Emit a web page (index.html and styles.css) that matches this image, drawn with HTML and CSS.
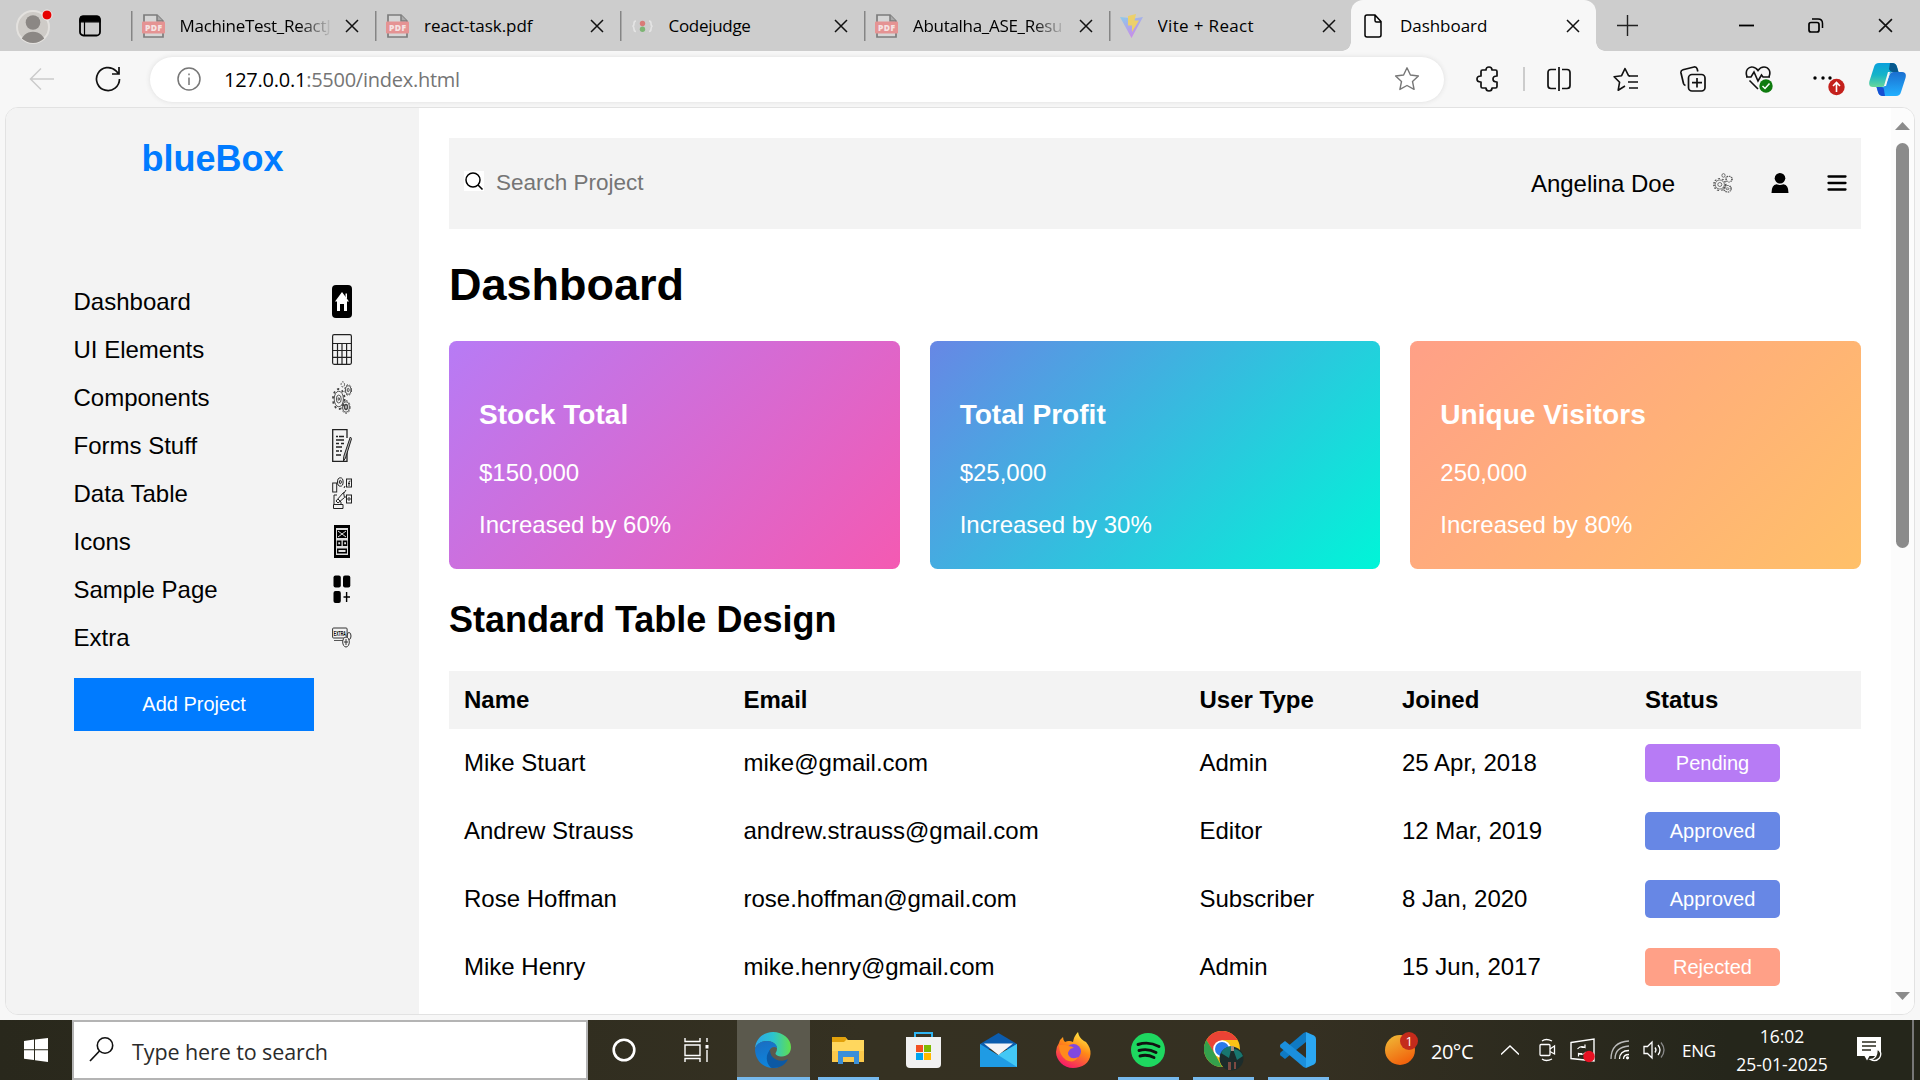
FILE: index.html
```html
<!DOCTYPE html>
<html lang="en">
<head>
<meta charset="utf-8">
<title>Dashboard</title>
<link rel="stylesheet" href="styles.css">
</head>
<body>
<svg class="defs" width="0" height="0">
  <defs>
    <symbol id="pdf" viewBox="0 0 23 24">
      <path d="M2 1h13l6 6v16H2z" fill="#d6d6d6" stroke="#7c7c7c" stroke-width="1.7"/>
      <path d="M15 1v6h6" fill="#aaa" stroke="#7c7c7c" stroke-width="1.5"/>
      <rect y="7.5" width="23" height="12" rx="1" fill="#e59393"/>
      <text x="11.5" y="16.8" text-anchor="middle" font-family="Open Sans" font-weight="800" font-size="8.5" textLength="17" fill="#f5e3e3">PDF</text>
    </symbol>
    <symbol id="x" viewBox="0 0 14 14"><path d="M1 1l12 12M13 1L1 13" stroke="#111" stroke-width="1.5" fill="none"/></symbol>
    <symbol id="gears" viewBox="0 0 20 33">
      <g fill="none" stroke="#444" stroke-width=".9">
        <ellipse cx="6.8" cy="18" rx="4.6" ry="7.8"/>
        <ellipse cx="6.8" cy="18" rx="5.8" ry="10" stroke-width="1.8" stroke-dasharray="2.2 2.9"/>
        <ellipse cx="6.8" cy="18" rx="2.4" ry="4"/>
        <ellipse cx="6.8" cy="18" rx=".7" ry="1.4"/>
        <ellipse cx="16.2" cy="9" rx="2.7" ry="4.2"/>
        <ellipse cx="16.2" cy="9" rx="3.4" ry="5.3" stroke-dasharray="2 1.6"/>
        <ellipse cx="16.2" cy="9" rx="1" ry="1.7"/>
        <ellipse cx="14" cy="26" rx="3.4" ry="5.2"/>
        <ellipse cx="14" cy="26" rx="4.1" ry="6.4" stroke-dasharray="2 1.5"/>
        <ellipse cx="14" cy="26" rx="1.4" ry="2.4" stroke-width="1.5"/>
        <ellipse cx="10.800" cy="3.4" rx="1.7" ry="2.6" stroke-dasharray="2 1"/>
      </g>
    </symbol>
  </defs>
</svg>

<header class="tabstrip">
  <div class="profile">
    <svg width="38" height="44" viewBox="0 0 38 44"><defs><clipPath id="av"><circle cx="17" cy="23" r="16"/></clipPath></defs>
      <circle cx="17" cy="23" r="16" fill="#cecbc7" stroke="#e3e1de" stroke-width="2"/>
      <g clip-path="url(#av)" fill="#8b8784"><circle cx="17" cy="18.500" r="7.300"/><path d="M4.500 39c1-7 6-11.300 12.500-11.300S28.500 32 29.500 39z"/></g>
      <circle cx="31" cy="11" r="5" fill="#e60000" stroke="#eee" stroke-width="1"/></svg>
    <svg width="22" height="22" viewBox="0 0 22 22"><rect x="1" y="1.500" width="20" height="19" rx="3.500" fill="none" stroke="#000" stroke-width="1.800"/><path d="M1 6.800V4q0-3 3-3h14q3 0 3 3v2.800zM5.500 6v14" stroke="#000" stroke-width="1.200"/></svg>
  </div>
  <div class="tab"><svg class="fav"><use href="#pdf"/></svg><span class="label faded">MachineTest_ReactJ</span><svg class="close"><use href="#x"/></svg></div>
  <div class="tab"><svg class="fav"><use href="#pdf"/></svg><span class="label wide">react-task.pdf</span><svg class="close"><use href="#x"/></svg></div>
  <div class="tab"><svg class="fav" viewBox="0 0 23 24"><g fill="none" stroke="#e4e4e4" stroke-width="1.600"><path d="M5 7q-2 0-2 2.500T1.500 12Q3 12.500 3 15t2 2.500M18 7q2 0 2 2.500t1.500 2.500q-1.500.5-1.500 3t-2 2.500"/></g><circle cx="11.500" cy="9.500" r="2.700" fill="#d97b78"/><circle cx="11.500" cy="15.300" r="2.700" fill="#7db574"/></svg><span class="label">Codejudge</span><svg class="close"><use href="#x"/></svg></div>
  <div class="tab"><svg class="fav"><use href="#pdf"/></svg><span class="label faded">Abutalha_ASE_Resu</span><svg class="close"><use href="#x"/></svg></div>
  <div class="tab last"><svg class="fav" viewBox="0 0 23 24"><defs><linearGradient id="vt" x2=".5" y2="1"><stop stop-color="#8ccbea"/><stop offset="1" stop-color="#c98be8"/></linearGradient></defs><path d="M0 3l11.500 21L23 3l-9 1.500z" fill="url(#vt)"/><path d="M8 2l8-2-1.500 6.500H19L12 18v-6.500H8z" fill="#ecd06b"/></svg><span class="label wider">Vite + React</span><svg class="close"><use href="#x"/></svg></div>
  <div class="tab active"><svg class="fav" viewBox="0 0 23 24"><path d="M5 1h8l6 6.500V21q0 2-2 2H5q-2 0-2-2V3q0-2 2-2zM13 1v5.500q0 1.500 1.500 1.500H19" fill="none" stroke="#000" stroke-width="1.500"/></svg><span class="label wide">Dashboard</span><svg class="close"><use href="#x"/></svg></div>
  <div class="newtab"><svg width="21" height="21" viewBox="0 0 21 21"><path d="M10.500 0v21M0 10.500h21" stroke="#222" stroke-width="1.400"/></svg></div>
  <div class="winctl">
    <svg width="15" height="15" viewBox="0 0 15 15"><path d="M0 7.500h15" stroke="#000" stroke-width="1.800"/></svg>
    <svg width="16" height="15" viewBox="0 0 16 15"><rect x="1" y="4.500" width="10" height="9.500" rx="2" fill="none" stroke="#000" stroke-width="1.700"/><path d="M4 1h6q4.500 0 4.500 4.500V10" fill="none" stroke="#000" stroke-width="1.500"/></svg>
    <svg width="15" height="15" viewBox="0 0 14 14"><use href="#x"/></svg>
  </div>
</header>

<div class="toolbar">
  <div class="navbtns">
    <svg width="26" height="24" viewBox="0 0 26 24"><path d="M25 12H1.500M12 1.500L1.500 12 12 22.500" fill="none" stroke="#cbcbcb" stroke-width="1.500"/></svg>
    <svg width="26" height="26" viewBox="0 0 26 26"><path d="M24.500 13A11.500 11.500 0 1 1 21 4.800L24 8M24 1v7h-7" fill="none" stroke="#111" stroke-width="1.700"/></svg>
  </div>
  <div class="address">
    <svg width="24" height="24" viewBox="0 0 24 24"><circle cx="12" cy="12" r="11" fill="none" stroke="#777" stroke-width="1.500"/><path d="M12 10.500V18M12 6.500v1.800" stroke="#777" stroke-width="1.500"/></svg>
    <span class="url"><b>127.0.0.1</b>:5500/index.html</span>
    <svg width="26" height="26" viewBox="0 0 26 26"><path d="M13 1.800l3.400 7.200 8 1-5.900 5.500 1.600 7.900L13 19.500l-7.100 3.900 1.600-7.900L1.600 10l8-1z" fill="none" stroke="#777" stroke-width="1.400" stroke-linejoin="round"/></svg>
  </div>
  <div class="tools">
    <svg width="24" height="26" viewBox="0 0 24 26"><path d="M5 5.500q0-1.500 1.500-1.500H10q0-3 3-3t3 3h3.500Q21 4 21 5.500V10q-4 0-4 3t4 3v4.500q0 1.500-1.500 1.500H16q0 3-3 3t-3-3H6.500Q5 22 5 20.500V16q-4 0-4-3t4-3z" fill="none" stroke="#111" stroke-width="1.700" stroke-linejoin="round"/></svg>
    <i class="divider"></i>
    <svg width="24" height="24" viewBox="0 0 24 24"><path d="M9 2.500H4q-3 0-3 3v13q0 3 3 3h5M15 2.500h5q3 0 3 3v13q0 3-3 3h-5M12 0v24" fill="none" stroke="#111" stroke-width="1.700"/></svg>
    <svg width="26" height="25" viewBox="0 0 26 25"><path d="M17 9l-1.500-.3L12 1.500 8.600 8.700l-7.500 1 5.500 5.500-1.400 8L12 19" fill="none" stroke="#111" stroke-width="1.600" stroke-linejoin="round"/><path d="M16 9h9M15 15h10M16 21h9" stroke="#111" stroke-width="1.700"/></svg>
    <svg width="26" height="26" viewBox="0 0 26 26"><rect x="8.500" y="8.500" width="16.500" height="16.500" rx="3.500" fill="none" stroke="#111" stroke-width="1.700"/><path d="M17 12v9.500M12 16.700h10M5.500 19.500Q4 19 3.500 17.500L1 7q-.5-2.500 2-3.200L14 1q2.500-.3 3.200 2l.6 2.500" fill="none" stroke="#111" stroke-width="1.700"/></svg>
    <svg width="28" height="28" viewBox="0 0 28 28"><path d="M2 11.500C-.5 5 4 1.500 7.500 2c3 .3 4.500 2 5.500 3.500C14 4 16 2 19 2c4 0 7.500 4 5 9.500M4.500 15.500L13 24M1 12h5l3-5 4 9 3.500-6 1.500 2h7" fill="none" stroke="#111" stroke-width="1.600"/><circle cx="21" cy="21" r="6.700" fill="#0f7b0f"/><path d="M17.500 21l2.500 2.500 4.500-5" fill="none" stroke="#fff" stroke-width="1.500"/></svg>
    <svg class="more" width="33" height="33" viewBox="0 0 33 33"><circle cx="3" cy="15" r="1.700"/><circle cx="11" cy="15" r="1.700"/><circle cx="18" cy="15" r="1.700"/><circle cx="24.500" cy="24" r="8.200" fill="#c4201c"/><path d="M24.500 29v-9M21 23l3.500-3.500L28 23" fill="none" stroke="#fff" stroke-width="1.600"/></svg>
    <svg width="37" height="33" viewBox="0 0 37 33"><defs><linearGradient id="c1" x2="0" y2="1"><stop stop-color="#0aa0dc"/><stop offset=".5" stop-color="#14b4c8"/><stop offset="1" stop-color="#67d79a"/></linearGradient><linearGradient id="c2" x2="0" y2="1"><stop stop-color="#1b6fd0"/><stop offset="1" stop-color="#22b0ff"/></linearGradient></defs>
      <path d="M10 0h13q4 0 5 4l1.500 5H24q-3 0-4 3l-3.500 9q-1 3-4 3H4q-5 0-3.500-6L5 4q1-4 5-4z" fill="url(#c1)"/><path d="M21 0h2q4 0 5 4l1.500 5H24q-3 0-4-3z" fill="#07588d"/><path d="M27 33H14q-4 0-5-4L7.500 24H13q3 0 4-3l3.500-9q1-3 4-3H33q5 0 3.500 6L32 29q-1 4-5 4z" fill="url(#c2)"/><path d="M16 33h-2q-4 0-5-4L7.500 24H12q3 0 3 3z" fill="#174fd2"/><path d="M19 9h2l-4 14h-2z" fill="#f7f7f7"/></svg>
  </div>
</div>

<div class="viewport">
  <aside class="sidebar">
    <div class="brand">blueBox</div>
    <nav class="menu">
      <a>Dashboard <svg class="ico" viewBox="0 0 20 33"><rect width="20" height="33" rx="4"/><path d="M10 7l7 9.500h-2V26h-3v-7H8v7H5v-9.500H3z" fill="#fff"/><path d="M13.500 8.500h1.500v5h-1.500z" fill="#fff"/></svg></a>
      <a>UI Elements <svg class="ico" viewBox="0 0 20 33"><rect x=".6" y="1.700" width="18.800" height="29.600" rx="1.500" fill="none" stroke="#222" stroke-width="1.200"/><path d="M.6 10.500h18.800M.6 17.500h18.800M.6 24.300h18.800M5.500 10.500v20.800M10 10.500v20.800M14.600 10.500v20.800" stroke="#222" stroke-width="1.200"/></svg></a>
      <a>Components <svg class="ico"><use href="#gears"/></svg></a>
      <a>Forms Stuff <svg class="ico" viewBox="0 0 20 33"><path d="M15 9V.700H.700v31.600H15V23" fill="none" stroke="#222" stroke-width="1.300"/><path d="M4 7.500h2M7 7.500h5M4 11h8M4 14.500h3M9 14.500h3M4 18h6M4 22h3M8 22h2M4 26h5" stroke="#222" stroke-width="1.300"/><path d="M18.300 8l1.300 1.500L13.500 29l-2 3 .2-4.500z" fill="#bbb" stroke="#222"/></svg></a>
      <a>Data Table <svg class="ico" viewBox="0 0 20 33"><g fill="none" stroke="#222"><rect x=".7" y="6" width="4" height="9"/><path d="M1.500 31.500h9.500v-4H1.500zM2 27.500V18h3M4 24l7.500-8.500 1 5L6 26zM12 16l2-3M13 20h2M6 22l3 3v3M12 11l1-2"/><ellipse cx="8.300" cy="5" rx="2.800" ry="4.200"/><ellipse cx="8.300" cy="5" rx="1" ry="1.700"/><rect x="14.500" y="2" width="5" height="8"/><path d="M17 9V5q0-1 1.500-1M16 6.500h2"/><rect x="14.500" y="18" width="5" height="8"/><circle cx="17" cy="22" r="1.200"/></g></svg></a>
      <a>Icons <svg class="ico" viewBox="0 0 20 33"><path d="M2 0h16v33H2z"/><path d="M4 3h12v27H4z" fill="#ddd"/><path d="M5 5h10v8H5zM4.800 15.500h4.700v5.500H4.800zM10.800 15.500h4.500v5.500h-4.500zM5 23.500h10v5H5z"/><path d="M6 6l8 6M14 6l-8 6" stroke="#ddd"/><path d="M6.300 17.200h1.800v2H6.300zM12.200 17.200H14v2h-1.800zM6.500 25h7v2h-7z" fill="#ddd"/></svg></a>
      <a>Sample Page <svg class="ico" viewBox="0 0 20 33"><rect x="1.500" y="2.500" width="7.300" height="12" rx="2"/><rect x="11" y="2.500" width="7.300" height="12" rx="2"/><rect x="1.500" y="18" width="7.300" height="12" rx="2"/><path d="M14.600 19v10M11.500 24h6.500" stroke="#000" stroke-width="1.400"/></svg></a>
      <a>Extra <svg class="ico" viewBox="0 0 20 33"><rect x=".6" y="7" width="14.500" height="10" rx="1" fill="none" stroke="#333"/><path d="M2 19.500h9" stroke="#555"/><text x="1.800" y="15" font-family="Liberation Sans" font-weight="700" font-size="7" textLength="12" lengthAdjust="spacingAndGlyphs">EXTRA</text><ellipse cx="17" cy="15" rx="2" ry="3.500" fill="none" stroke="#333"/><ellipse cx="14" cy="21" rx="3.300" ry="5" fill="#f3f3f3" stroke="#333"/><path d="M14 18v6M12 21h4" stroke="#333"/></svg></a>
    </nav>
    <button class="add">Add Project</button>
  </aside>

  <main class="main">
    <div class="topbar">
      <svg class="mag" viewBox="0 0 20 20"><path d="M0 0h20v20H0z" fill="#fff"/><circle cx="9" cy="9" r="7" fill="none" stroke="#000" stroke-width="1.500"/><path d="M14 14l4.500 4.500" stroke="#000" stroke-width="1.600"/></svg>
      <span class="placeholder">Search Project</span>
      <span class="user">Angelina Doe</span>
      <svg class="small" preserveAspectRatio="none" viewBox="0 0 20 33"><g fill="none" stroke="#555"><ellipse cx="6.800" cy="19" rx="4.600" ry="7.500"/><ellipse cx="6.800" cy="19" rx="5.900" ry="9.800" stroke-width="1.700" stroke-dasharray="2.200 2.200"/><ellipse cx="6.800" cy="19" rx="2" ry="3.300"/><ellipse cx="16" cy="10" rx="3" ry="4.800" stroke-width="1.700" stroke-dasharray="1.600 1"/><ellipse cx="14.500" cy="26" rx="3.600" ry="5.500" stroke-width="1.800" stroke-dasharray="1.600 1"/><circle cx="14.500" cy="26" r="1.500"/><ellipse cx="10.500" cy="4" rx="1.600" ry="3"/></g></svg>
      <svg class="small" viewBox="0 0 20 20"><circle cx="10" cy="5.300" r="5.300"/><path d="M1.500 20q0-8 5-8.700 3.500 1.500 7 0 5 .7 5 8.700z"/></svg>
      <svg class="small" viewBox="0 0 20 20"><path d="M1.500 3.500h17M1.500 10h17M1.500 16.500h17" stroke="#000" stroke-width="2.300" stroke-linecap="round"/></svg>
    </div>
    <h1>Dashboard</h1>
    <div class="cards">
      <section class="card stock"><h3>Stock Total</h3><p>$150,000</p><p>Increased by 60%</p></section>
      <section class="card profit"><h3>Total Profit</h3><p>$25,000</p><p>Increased by 30%</p></section>
      <section class="card visitors"><h3>Unique Visitors</h3><p>250,000</p><p>Increased by 80%</p></section>
    </div>
    <h2>Standard Table Design</h2>
    <div class="table">
      <div class="row head"><span>Name</span><span>Email</span><span>User Type</span><span>Joined</span><span>Status</span></div>
      <div class="row"><span>Mike Stuart</span><span>mike@gmail.com</span><span>Admin</span><span>25 Apr, 2018</span><span class="badge pending">Pending</span></div>
      <div class="row"><span>Andrew Strauss</span><span>andrew.strauss@gmail.com</span><span>Editor</span><span>12 Mar, 2019</span><span class="badge approved">Approved</span></div>
      <div class="row"><span>Rose Hoffman</span><span>rose.hoffman@gmail.com</span><span>Subscriber</span><span>8 Jan, 2020</span><span class="badge approved">Approved</span></div>
      <div class="row"><span>Mike Henry</span><span>mike.henry@gmail.com</span><span>Admin</span><span>15 Jun, 2017</span><span class="badge rejected">Rejected</span></div>
    </div>
  </main>
  <div class="scroll">
    <svg width="15" height="8" viewBox="0 0 15 8"><path d="M7.500 0L15 8H0z" fill="#8b8b8b"/></svg>
    <i class="thumb"></i>
    <svg class="down" width="15" height="8" viewBox="0 0 15 8"><path d="M0 0h15L7.500 8z" fill="#8b8b8b"/></svg>
  </div>
</div>

<footer class="taskbar">
  <div class="start"><svg width="24" height="24" viewBox="0 0 24 24"><path d="M0 3l10-1.500V11.200H0zM11 1.400L24 0v11.200H11zM0 12.300h10v9.800L0 20.700zM11 12.300h13V24l-13-1.800z" fill="#fff"/></svg></div>
  <div class="search"><svg width="25" height="25" viewBox="0 0 25 25"><circle cx="16" cy="8.500" r="7.700" fill="none" stroke="#111" stroke-width="1.600"/><path d="M10.500 14L1 24" stroke="#111" stroke-width="1.700"/></svg><span>Type here to search</span></div>
  <div class="slot cortana"><svg width="24" height="24" viewBox="0 0 24 24"><circle cx="12" cy="12" r="10.300" fill="none" stroke="#fff" stroke-width="2.600"/></svg></div>
  <div class="slot taskview"><svg width="25" height="24" viewBox="0 0 25 24"><path d="M1 0v3.500h15V0M1 7h15v10.500H1zM1 24v-3.500h15V24M23 0v4M23 12v12" fill="none" stroke="#fff" stroke-width="1.400"/><path d="M21.500 7h3v3.500h-3z" fill="#fff"/></svg></div>
  <div class="slot app current"><svg width="36" height="36" viewBox="0 0 36 36"><defs><linearGradient id="e1" x2="1"><stop stop-color="#2ba6ea"/><stop offset=".5" stop-color="#2cc3cf"/><stop offset="1" stop-color="#61e04c"/></linearGradient><linearGradient id="e2" x2=".3" y2="1"><stop stop-color="#1b6cc0"/><stop offset="1" stop-color="#0d84dc"/></linearGradient></defs>
    <path d="M0 16C1 6 9 0 18 0c10 0 18 7 18 15 0 6-4 9.500-9 9.500-4 0-6.500-1.500-6.500-3 0-1 1.500-2 1.500-5C22 12 17 9 12 9 6 9 2 12 0 16z" fill="url(#e1)"/><path d="M0 17C2 11 7 9 12 9c5 0 10 3 10 7-5-3-9 2-8 8 1 5 5 9 9 11.500-2 .5-3 .5-5 .5C8 36 0 28 0 17z" fill="url(#e2)"/><path d="M15 18c-4 4-5 12 1 17.800C25 37 31 32 33 27c-4 2-8 2.500-12 .5-4-2-6-5-6-9.500z" fill="#0c59a4"/></svg></div>
  <div class="slot app open"><svg width="32" height="27" viewBox="0 0 32 27"><path d="M0 0h13l3 3h16v22H0z" fill="#ffd75e"/><path d="M0 0h13l2 2-3 3H0z" fill="#e2a10b"/><path d="M0 25V14h32v11z" fill="#fbc94b"/><path d="M6 27V14h21v13h-5v-7H11v7z" fill="#3a8fd9"/></svg></div>
  <div class="slot app"><svg width="35" height="36" viewBox="0 0 35 36"><path d="M9 6V1h17v5" fill="none" stroke="#2fb5f3" stroke-width="2"/><path d="M0 5h35v27q0 4-4 4H4q-4 0-4-4z" fill="#f1f1f1"/><path d="M10 13h7v7h-7z" fill="#f25022"/><path d="M18 13h7v7h-7z" fill="#7fba00"/><path d="M10 21h7v7h-7z" fill="#00a4ef"/><path d="M18 21h7v7h-7z" fill="#ffb900"/></svg></div>
  <div class="slot app"><svg width="37" height="34" viewBox="0 0 37 34"><path d="M0 11L18.500 0 37 11v5H0z" fill="#0b5cad"/><path d="M0 11l18 11L37 11v23H0z" fill="#1f9be4"/><path d="M37 11v23L18 22z" fill="#43c8f5"/><path d="M4 10.500h29L18.500 22z" fill="#f4f4f6"/></svg></div>
  <div class="slot app"><svg width="35" height="36" viewBox="0 0 35 36"><defs><linearGradient id="ff" x1=".8" x2=".3" y2="1"><stop stop-color="#fff34a"/><stop offset=".45" stop-color="#ff8a16"/><stop offset="1" stop-color="#f5156c"/></linearGradient></defs><path d="M3 11q1-4 4-6 0 3 2 5 4-2 8 0 1-6 5-10 1 6 6 9l2 1q5 6 4.500 12C34 31 26 36 17 36S0 28.500 0 20q0-5 3-9z" fill="url(#ff)"/><circle cx="17.500" cy="19.500" r="7.500" fill="#8148de"/><path d="M3 13q5-1 9 1 4 0 6 2-4 0-5 3-2 2 0 5 3 4 9 1-4 7-12 3-7-5-7-15z" fill="#ff8a1c"/></svg></div>
  <div class="slot app open"><svg width="34" height="34" viewBox="0 0 34 34"><circle cx="17" cy="17" r="17" fill="#1ed760"/><path d="M7 11.500q11-3.500 21 2M8 17.500q9-2.500 17 2M9 23q7-2 14 1.500" fill="none" stroke="#111" stroke-width="2.900" stroke-linecap="round"/></svg></div>
  <div class="slot app open"><svg class="chrome" width="40" height="40" viewBox="0 0 40 40"><circle cx="18" cy="18" r="18" fill="#fbc116"/><path d="M2.400 9A18 18 0 0 1 33.600 9H18l-8 13z" fill="#ea4335"/><path d="M2.400 9L11 23l7 13A18 18 0 0 1 2.400 9z" fill="#34a04c"/><circle cx="18" cy="18" r="8.800" fill="#fff"/><circle cx="18" cy="18" r="7" fill="#2c79ea"/><circle cx="27.500" cy="27.500" r="12" fill="#1c2c2b"/><path d="M17 22q4-7 11-7l-3 12zM29 18q7 0 10 7l-6 4z" fill="#18766f"/><path d="M27 15h3v5h-3z" fill="#a78c80"/><path d="M24 31h3v8h-3zM30 31h2v7h-2z" fill="#7d4a42"/></svg></div>
  <div class="slot app open"><svg width="36" height="36" viewBox="0 0 36 36"><path d="M26 0l8 3.500Q36 4.500 36 7v22q0 2.500-2 3.500L26 36z" fill="#2ba7f2"/><path d="M26 0v10L5 27l-4.500-3.500q-1-1.500 0-3L23.500 1z" fill="#0f7ac3"/><path d="M26 36V26L5 9 .5 12.500q-1 1.500 0 3L23.500 35z" fill="#1b8fdc"/></svg></div>
  <div class="weather"><svg width="36" height="34" viewBox="0 0 36 34"><defs><linearGradient id="sun" x2=".5" y2="1"><stop stop-color="#efbd38"/><stop offset="1" stop-color="#f2640d"/></linearGradient></defs><circle cx="15" cy="18" r="15" fill="url(#sun)"/><circle cx="24" cy="9" r="9" fill="#c42b1c"/><text x="24" y="13.500" text-anchor="middle" font-family="Open Sans" font-size="13" fill="#fff">1</text></svg><span>20°C</span></div>
  <div class="tray">
    <svg width="18" height="10" viewBox="0 0 18 10"><path d="M0 9.500L9 1l9 8.500" fill="none" stroke="#fff" stroke-width="1.400"/></svg>
    <svg width="17" height="24" viewBox="0 0 17 24"><g fill="none" stroke="#fff" stroke-width="1.300"><rect x="1" y="6.500" width="10" height="11" rx="1"/><path d="M11 11l4.500-3v8L11 13.500M3 3q4-3 10 0M3 21q4 3 10 0"/></g></svg>
    <svg width="25" height="25" viewBox="0 0 25 25"><path d="M1 4.500L24 1v22L1 20.500z" fill="none" stroke="#fff" stroke-width="1.400"/><path d="M7.500 11q3-4 7.500-1.500V6.500M16 14q-3 4-7.500 1.500v3M15 9.500h-3.500M8.500 15.500H12" fill="none" stroke="#fff" stroke-width="1.200"/><circle cx="19" cy="18.500" r="5.700" fill="#e81123"/></svg>
    <svg width="20" height="20" viewBox="0 0 20 20"><g fill="none" stroke-width="1.300"><path d="M1 19Q1 2 19 1M5 19Q5 7 19 6" stroke="#bbb"/><path d="M9.500 19q0-8.500 9.500-8.500M13.500 19q0-4.500 5.500-4.500" stroke="#fff"/></g><circle cx="17.500" cy="17.800" r="1.600" fill="#fff"/></svg>
    <svg width="23" height="20" viewBox="0 0 23 20"><g fill="none" stroke="#fff" stroke-width="1.300"><path d="M1 6.500h3.500L9 2v16l-4.500-4.500H1zM12 7.500q2 2.500 0 5M15 5q4 5 0 10"/><path d="M18 2.500q6 7.500 0 15" stroke="#888"/></g></svg>
    <span class="lang">ENG</span>
    <span class="clock"><span>16:02</span><span>25-01-2025</span></span>
    <svg width="26" height="26" viewBox="0 0 26 26"><path d="M0 0h24v19H12.500L10 23.500 7.500 19H0z" fill="#fff"/><path d="M5 5h14M5 9h14M5 13h9" stroke="#2b2a1e" stroke-width="1.400"/><path d="M20 12q6 3 2.500 9-4 4.500-9 1.500 7-.5 6.500-10.500z" fill="#2b2a1e" stroke="#fff" stroke-width="1.300"/></svg>
  </div>
</footer>
</body>
</html>
```

FILE: styles.css
```css
* { box-sizing: border-box; }
body {
  margin: 0;
  width: 1920px;
  height: 1080px;
  overflow: hidden;
  display: flex;
  flex-direction: column;
  background: #f7f7f7;
  font-family: "Liberation Sans", Arial, sans-serif;
  font-size: 24px;
  color: #000;
}
svg { display: block; flex: none; }
.defs { position: absolute; }

/* browser tabs */
.tabstrip {
  display: flex;
  height: 51px;
  flex: none;
  background: #cdcdcd;
  font-family: "Open Sans", "Noto Sans", sans-serif;
  font-size: 17px;
}
.profile { width: 130.500px; display: flex; align-items: center; padding: 1px 0 0 16px; gap: 25px; }
.tab {
  width: 244.5px;
  display: flex;
  align-items: center;
  padding: 0 16px 0 11px;
  background: linear-gradient(#858585, #858585) left 11px / 1.5px 30px no-repeat;
}
.fav { width: 23px; height: 24px; margin-right: 15px; }
.label { flex: 1; white-space: nowrap; overflow: hidden; letter-spacing: -.3px; margin-right: 13px; }
.label.wide { letter-spacing: -.05px; }
.label.wider { letter-spacing: .35px; }
.faded { -webkit-mask: linear-gradient(90deg, #000 78%, transparent); mask: linear-gradient(90deg, #000 78%, transparent); }
.close { width: 14px; height: 14px; }
.tab.last { width: 242.5px; padding-right: 15px; }
.tab.active { position: relative; background: #f7f7f7; border-radius: 12px 12px 0 0; padding-right: 16px; }
.tab.active::before, .tab.active::after {
  content: "";
  position: absolute;
  bottom: 0;
  width: 9px;
  height: 9px;
}
.tab.active::before { left: -9px; background: radial-gradient(circle at 0 0, #cdcdcd 8.5px, #f7f7f7 9px); }
.tab.active::after { right: -9px; background: radial-gradient(circle at 100% 0, #cdcdcd 8.5px, #f7f7f7 9px); }
.newtab { width: 64px; display: grid; place-items: center; }
.winctl { flex: 1; display: flex; align-items: center; justify-content: flex-end; gap: 54px; padding-right: 27px; }

/* toolbar */
.toolbar { display: flex; align-items: center; height: 56px; flex: none; }
.navbtns { width: 150px; display: flex; gap: 40px; padding-left: 29px; align-items: center; }
.address {
  width: 1294px;
  height: 45px;
  border-radius: 23px;
  background: #fff;
  box-shadow: 0 0 5px #ddd;
  display: flex;
  align-items: center;
  padding: 0 24px 0 27px;
  font-family: "Open Sans", "Noto Sans", sans-serif;
  font-size: 20px;
  color: #757575;
}
.url { flex: 1; padding-left: 23px; letter-spacing: -.25px; }
.url b { font-weight: 400; color: #000; }
.tools {
  display: grid;
  grid-template-columns: 66px 5px 66px 68px 65px 68px 68px 53px;
  place-items: center;
  padding-left: 11px;
}
.more { margin-left: 2px; }
.divider { width: 2px; height: 24px; background: #ccc; }

/* page frame */
.viewport {
  display: flex;
  width: 1910px;
  height: 908px;
  flex: none;
  margin: 0 0 5px 5px;
  border: 1px solid #e2e2e2;
  border-radius: 13px;
  overflow: hidden;
  background: #fff;
}
.sidebar { width: 413px; background: #f3f3f3; }
.brand { height: 101px; line-height: 101px; text-align: center; font-size: 36px; font-weight: 700; color: #007bff; }
.menu { padding: 69px 67px 0 67.500px; }
.menu a { display: flex; align-items: center; justify-content: space-between; height: 48px; }
.ico { width: 20px; height: 33px; margin-bottom: 1px; }
.add {
  display: block;
  width: 240px;
  height: 53px;
  margin: 16px 0 0 68px;
  border: 0;
  background: #007bff;
  color: #fff;
  font: 20px "Liberation Sans", Arial, sans-serif;
}
.main { width: 1472px; padding: 30px; }
.topbar { height: 91px; background: #f3f3f3; display: flex; align-items: center; padding: 0 14px 0 15px; }
.mag { width: 20px; height: 20px; margin-bottom: 5px; }
.placeholder { flex: 1; padding: 0 0 1px 12px; font-size: 22.5px; color: #757575; }
.user { margin-right: 6px; padding-top: 1px; }
.small { width: 20px; height: 20px; margin: 0 0 1px 37px; }
.user + .small { margin-left: 32px; }
h1, h2, h3, p { margin: 0; }
h1 { font-size: 45px; line-height: 111px; height: 112px; }
.cards { display: grid; grid-template-columns: repeat(3, 1fr); gap: 30px; }
.card { height: 228px; padding: 58px 30px 0; border-radius: 7.5px; color: #fff; }
.card h3 { font-size: 28.08px; line-height: 32px; margin-bottom: 28px; }
.card p { line-height: 28px; margin-bottom: 24px; }
.stock { background: linear-gradient(135deg, #b77bf5, #f45ab2); }
.profit { background: linear-gradient(135deg, #6787e5, #00f5d8); }
.visitors { background: linear-gradient(135deg, #ffa087, #ffc069); }
h2 { font-size: 36px; line-height: 102px; }
.row {
  display: grid;
  grid-template-columns: 279.500px 456px 202.500px 243px 1fr;
  align-items: center;
  height: 68px;
  padding-left: 15px;
}
.head { height: 58px; background: #f3f3f3; font-weight: 700; }
.badge { width: 135px; height: 38px; line-height: 38px; border-radius: 5px; text-align: center; font-size: 20px; color: #fff; }
.pending { background: #b77bf5; }
.approved { background: #6787e5; }
.rejected { background: #ffa087; }
.scroll { flex: 1; display: flex; flex-direction: column; align-items: center; padding: 14px 0 14px; background: #fcfcfc; }
.thumb { width: 13px; height: 405px; margin-top: 13px; border-radius: 7px; background: #8b8b8b; }
.down { margin-top: auto; }

/* taskbar */
.taskbar {
  display: flex;
  height: 60px;
  flex: none;
  background: linear-gradient(90deg, #29281c, #353122 45%, #353022 68%, #25261b 90%);
  color: #fff;
  font-family: "Open Sans", "Noto Sans", sans-serif;
}
.start { width: 72px; display: grid; place-items: center; }
.search {
  width: 516px;
  border: 2px solid #b4b4b4;
  background: #fff;
  display: flex;
  align-items: center;
  gap: 18px;
  padding-left: 15px;
  font-size: 21.500px;
  letter-spacing: -.1px;
  color: #2b2b2b;
}
.search span { padding-top: 2px; }
.search svg { margin-bottom: 2px; }
.slot { width: 75px; display: grid; place-items: center; }
.slot.cortana { width: 72px; }
.taskview { width: 73px; padding-right: 1px; margin-right: 3px; }
.current { width: 73px; background: #5b594d; margin: 0 1px 0 1px; }
.open, .current { background-image: linear-gradient(#76b9ed, #76b9ed); background-repeat: no-repeat; background-position: center bottom; background-size: 61px 3px; }
.current { background-size: 100% 3px; }
.app svg { margin-right: 1px; }
.app .chrome { margin: 2px 0 0 1px; }
.weather { display: flex; align-items: center; gap: 10px; padding: 0 0 3px 49px; font-size: 20px; letter-spacing: -.5px; width: 165px; }
.weather span { padding-top: 6px; }
.tray { flex: 1; display: flex; align-items: center; font-size: 17px; letter-spacing: -.3px; border-right: 2px solid #777; margin-right: 6px; }
.tray svg:nth-child(2) { margin-left: 20px; }
.tray svg:nth-child(3) { margin-left: 14px; }
.tray svg:nth-child(4) { margin-left: 15px; }
.tray svg:nth-child(5) { margin-left: 13px; }
.lang { margin-left: 16px; width: 36px; }
.clock { width: 128px; display: grid; gap: 5px; line-height: 23px; text-align: center; font-size: 17.500px; letter-spacing: 0; }
.clock + svg { margin-left: 11px; }
```
